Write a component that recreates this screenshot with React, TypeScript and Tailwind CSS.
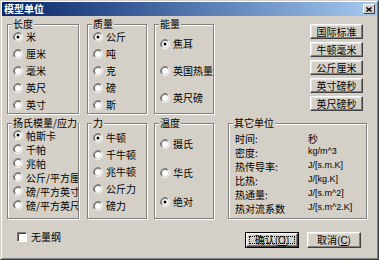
import React from "react";

const CJK = "[font-family:'Noto_Sans_CJK_SC','Noto_Sans',sans-serif]";
const LAT = "[font-family:'Liberation_Sans','Noto_Sans_CJK_SC',sans-serif]";

function Radio({ checked }: { checked?: boolean }) {
  return (
    <svg width="10" height="10" viewBox="0 0 12 12" className="shrink-0">
      <circle cx="6" cy="6" r="4.5" fill="#fff" />
      <path d="M2.11 9.89A5.5 5.5 0 0 1 9.89 2.11" fill="none" stroke="#808080" />
      <path d="M9.89 2.11A5.5 5.5 0 0 1 2.11 9.89" fill="none" stroke="#ffffff" />
      <path d="M2.82 9.18A4.5 4.5 0 0 1 9.18 2.82" fill="none" stroke="#404040" />
      <path d="M9.18 2.82A4.5 4.5 0 0 1 2.82 9.18" fill="none" stroke="#d4d0c8" />
      {checked && <circle cx="6" cy="6" r="1.8" fill="#000" />}
    </svg>
  );
}

function Group({
  title,
  className,
  children,
}: {
  title: string;
  className: string;
  children?: React.ReactNode;
}) {
  return (
    <div
      className={`relative shrink-0 border border-[#808080] shadow-[inset_1px_1px_0_#fff,1px_1px_0_#fff] ${className}`}
    >
      <span className="absolute -top-[6px] left-[4px] whitespace-nowrap bg-[#d4d0c8] px-px text-[10px] leading-[10px]">
        {title}
      </span>
      {children}
    </div>
  );
}

function RadioList({
  items,
  checked,
  rowH,
  pt,
}: {
  items: string[];
  checked: number;
  rowH: string;
  pt: string;
}) {
  return (
    <div className={`flex flex-col overflow-hidden pl-[5px] ${pt}`}>
      {items.map((t, i) => (
        <div key={t} className={`flex items-center gap-[3px] whitespace-nowrap text-[10px] ${rowH}`}>
          <Radio checked={i === checked} />
          <span>{t}</span>
        </div>
      ))}
    </div>
  );
}

function Btn({ children, className = "" }: { children: React.ReactNode; className?: string }) {
  return (
    <div
      className={`flex items-center justify-center border border-t-white border-l-white border-r-[#404040] border-b-[#404040] bg-[#d4d0c8] shadow-[inset_-1px_-1px_0_#808080,inset_1px_1px_0_#e8e6e1] text-[10px] leading-none ${className}`}
    >
      {children}
    </div>
  );
}

export default function App() {
  return (
    <div className={`h-[260px] w-[379px] overflow-hidden text-black ${CJK}`}>
      <div className="h-full w-full border border-t-[#d4d0c8] border-l-[#d4d0c8] border-r-[#404040] border-b-[#404040]">
        <div className="flex h-full w-full flex-col border border-t-white border-l-white border-r-[#808080] border-b-[#808080] bg-[#d4d0c8]">
          {/* title bar */}
          <div className="flex h-[14px] shrink-0 items-center justify-between bg-gradient-to-r from-[#0a246a] to-[#a6caf0] pl-[2px] pr-[2px]">
            <span className="text-[10px] font-bold leading-none text-white">模型单位</span>
            <div className="flex h-[10px] w-[12px] items-center justify-center border border-t-white border-l-white border-r-[#404040] border-b-[#404040] bg-[#d4d0c8]">
              <svg width="6" height="5" viewBox="0 0 6 5">
                <path d="M0.5 0.5L5.5 4.5M5.5 0.5L0.5 4.5" stroke="#000" strokeWidth="1.4" />
              </svg>
            </div>
          </div>

          {/* row 1 */}
          <div className="mt-[8px] flex">
            <Group title="长度" className="ml-[5px] h-[90px] w-[72px]">
              <RadioList items={["米", "厘米", "毫米", "英尺", "英寸"]} checked={0} rowH="h-[17px]" pt="pt-[3px]" />
            </Group>
            <Group title="质量" className="ml-[8px] h-[90px] w-[60px]">
              <RadioList items={["公斤", "吨", "克", "磅", "斯"]} checked={0} rowH="h-[17px]" pt="pt-[3px]" />
            </Group>
            <Group title="能量" className="ml-[7px] h-[90px] w-[60px]">
              <RadioList items={["焦耳", "英国热量", "英尺磅"]} checked={0} rowH="h-[27px]" pt="pt-[5px]" />
            </Group>
            <div className="ml-auto mr-[14px] flex flex-col gap-[3px]">
              {["国际标准", "牛顿毫米", "公斤厘米", "英寸磅秒", "英尺磅秒"].map((t) => (
                <Btn key={t} className="h-[15px] w-[53px]">
                  {t}
                </Btn>
              ))}
            </div>
          </div>

          {/* row 2 */}
          <div className="mt-[9px] flex">
            <Group title="扬氏模量/应力" className="ml-[5px] h-[96px] w-[72px]">
              <RadioList
                items={["帕斯卡", "千帕", "兆帕", "公斤/平方厘米", "磅/平方英寸", "磅/平方英尺"]}
                checked={0}
                rowH="h-[14px]"
                pt="pt-[4px]"
              />
            </Group>
            <Group title="力" className="ml-[8px] h-[96px] w-[60px]">
              <RadioList items={["牛顿", "千牛顿", "兆牛顿", "公斤力", "磅力"]} checked={0} rowH="h-[17px]" pt="pt-[5px]" />
            </Group>
            <Group title="温度" className="ml-[7px] h-[96px] w-[60px]">
              <RadioList items={["摄氏", "华氏", "绝对"]} checked={2} rowH="h-[29px]" pt="pt-[5px]" />
            </Group>
            <Group title="其它单位" className="ml-[14px] h-[96px] w-[139px]">
              <div className="flex flex-col pl-[6px] pt-[7px]">
                {[
                  ["时间:", "秒", true],
                  ["密度:", "kg/m^3", false],
                  ["热传导率:", "J/[s.m.K]", false],
                  ["比热:", "J/[kg.K]", false],
                  ["热通量:", "J/[s.m^2]", false],
                  ["热对流系数", "J/[s.m^2.K]", false],
                ].map(([l, v, c]) => (
                  <div key={l as string} className="flex h-[14px] items-center whitespace-nowrap">
                    <span className="w-[73px] text-[10px]">{l}</span>
                    <span className={c ? "text-[10px]" : `text-[9px] ${LAT}`}>{v}</span>
                  </div>
                ))}
              </div>
            </Group>
          </div>

          {/* bottom row */}
          <div className="mt-[13px] flex items-start">
            <div className="ml-[15px] mt-0 flex items-center gap-[4px]">
              <div className="h-[10px] w-[10px] border border-t-[#808080] border-l-[#808080] border-r-white border-b-white bg-white shadow-[inset_1px_1px_0_#404040]" />
              <span className="text-[10px] leading-[10px]">无量纲</span>
            </div>
            <div className="ml-auto mr-[16px] flex gap-[8px]">
              <div className="h-[16px] w-[54px] border border-black">
                <Btn className="relative h-full w-full">
                  <div className="absolute inset-[2px] border border-dotted border-black" />
                  <span>
                    确认(<span className={`underline ${LAT}`}>O</span>)
                  </span>
                </Btn>
              </div>
              <Btn className="h-[16px] w-[54px]">
                <span>
                  取消(<span className={`underline ${LAT}`}>C</span>)
                </span>
              </Btn>
            </div>
          </div>
        </div>
      </div>
    </div>
  );
}
